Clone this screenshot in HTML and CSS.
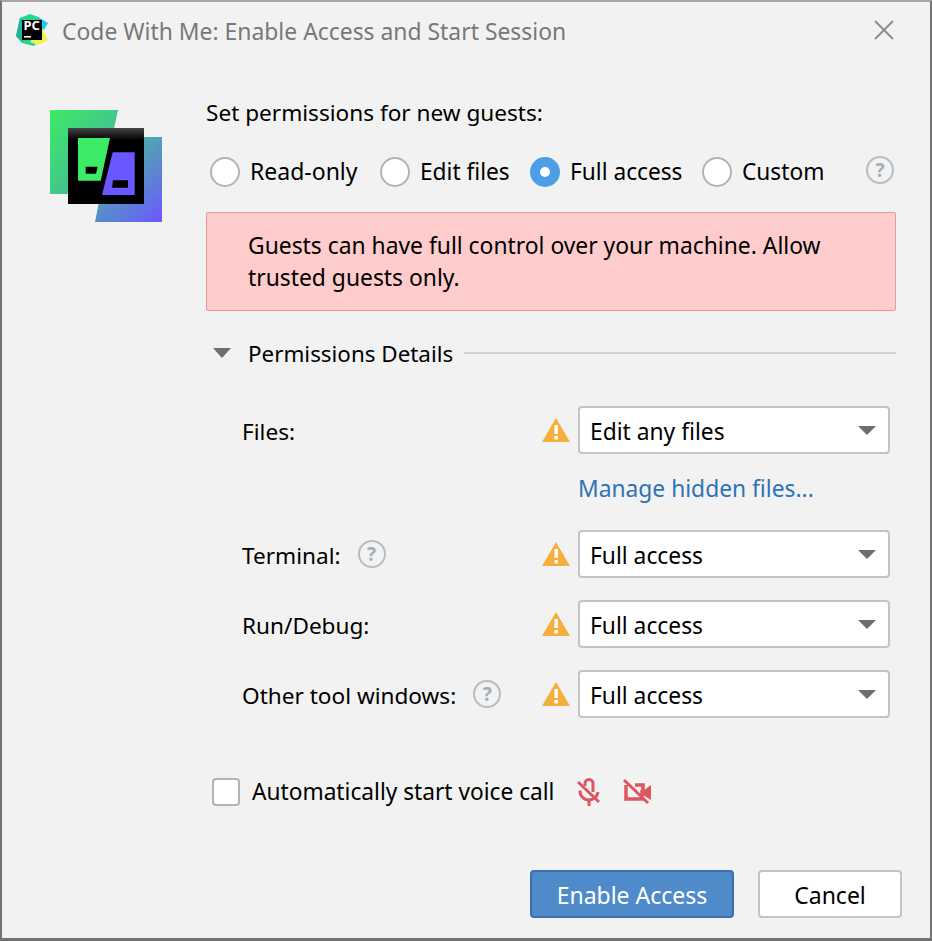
FILE: index.html
```html
<!DOCTYPE html>
<html lang="en">
<head>
<meta charset="utf-8">
<title>Code With Me</title>
<link rel="stylesheet" href="styles.css">
</head>
<body>
<div class="dialog">
  <header class="titlebar">
    <svg class="app-icon" width="32" height="32" viewBox="0 0 32 32">
      <polygon points="4,4 14,0 22,3 28,8 26,24 18,32 6,29 0,22" fill="#21d789"/>
      <polygon points="0,22 4,4 10,8 6,28" fill="#1db4a0"/>
      <polygon points="22,3 32,9 28,16 24,12" fill="#19c9ee"/>
      <polygon points="26,14 32,26 22,31 14,28" fill="#f5f04e"/>
      <rect x="6" y="6" width="20" height="20" fill="#000"/>
      <text x="7.5" y="16" class="app-icon-text">PC</text>
      <rect x="8" y="22" width="7" height="1.5" fill="#fff"/>
    </svg>
    <div class="title">Code With Me: Enable Access and Start Session</div>
    <svg class="close" width="20" height="20" viewBox="0 0 20 20"><path d="M1 1L19 19M19 1L1 19" stroke="#8f8f8f" stroke-width="2" fill="none"/></svg>
  </header>
  <main class="body">
    <div class="logo-col">
      <svg width="112" height="112" viewBox="50 110 112 112">
        <defs>
          <linearGradient id="lg1" x1="0" y1="0" x2="1" y2="1"><stop offset="0" stop-color="#3ceb66"/><stop offset="1" stop-color="#4aa8a8"/></linearGradient>
          <linearGradient id="lg2" x1=".45" y1=".25" x2="1" y2="1"><stop offset="0" stop-color="#4fa8b0"/><stop offset="1" stop-color="#6b57ff"/></linearGradient>
          <linearGradient id="lg3" x1="0" y1="0" x2="0" y2="1"><stop offset="0" stop-color="#444"/><stop offset=".16" stop-color="#000"/><stop offset="1" stop-color="#000"/></linearGradient>
        </defs>
        <polygon points="50,110 118,110 100,194 50,194" fill="url(#lg1)"/>
        <polygon points="112,137 162,137 162,222 95,222" fill="url(#lg2)"/>
        <rect x="68" y="128" width="76" height="76" fill="url(#lg3)"/>
        <polygon points="78,138 110,138 100.7,180.7 78,180.7" fill="#3ceb66"/>
        <polygon points="85.7,166.7 97.7,166.7 96,173.7 85.7,173.7" fill="#000"/>
        <polygon points="112.7,152.3 134.7,152.3 134.7,195 102,195" fill="#6b57ff"/>
        <polygon points="113,180.3 128,180.3 128,187.7 112,187.7" fill="#000"/>
      </svg>
    </div>
    <div class="content">
      <div class="heading">Set permissions for new guests:</div>
      <div class="radios">
        <label class="radio r1"><span class="dot"></span>Read-only</label>
        <label class="radio r2"><span class="dot"></span>Edit files</label>
        <label class="radio r3"><span class="dot on"></span>Full access</label>
        <label class="radio r4"><span class="dot"></span>Custom</label>
        <span class="help help-end">?</span>
      </div>
      <div class="alert">Guests can have full control over your machine. Allow trusted guests only.</div>
      <div class="details-head">
        <svg class="tri" width="18" height="10" viewBox="0 0 18 10"><polygon points="0,0 18,0 9,10" fill="#6e6e6e"/></svg>
        <span>Permissions Details</span>
        <span class="rule"></span>
      </div>
      <div class="rows">
        <div class="row">
          <div class="row-label">Files:</div>
          <svg class="warn" width="28" height="24" viewBox="0 0 28 24"><polygon points="14,0 28,24 0,24" fill="#f4af3d"/><rect x="12.5" y="7" width="3.4" height="9" fill="#fff"/><rect x="12.5" y="18" width="3.4" height="3.4" fill="#fff"/></svg>
          <div class="combo">Edit any files<span class="caret"></span></div>
        </div>
        <a class="link">Manage hidden files...</a>
        <div class="row">
          <div class="row-label">Terminal:<span class="help help-in">?</span></div>
          <svg class="warn" width="28" height="24" viewBox="0 0 28 24"><polygon points="14,0 28,24 0,24" fill="#f4af3d"/><rect x="12.5" y="7" width="3.4" height="9" fill="#fff"/><rect x="12.5" y="18" width="3.4" height="3.4" fill="#fff"/></svg>
          <div class="combo">Full access<span class="caret"></span></div>
        </div>
        <div class="row">
          <div class="row-label">Run/Debug:</div>
          <svg class="warn" width="28" height="24" viewBox="0 0 28 24"><polygon points="14,0 28,24 0,24" fill="#f4af3d"/><rect x="12.5" y="7" width="3.4" height="9" fill="#fff"/><rect x="12.5" y="18" width="3.4" height="3.4" fill="#fff"/></svg>
          <div class="combo">Full access<span class="caret"></span></div>
        </div>
        <div class="row">
          <div class="row-label">Other tool windows:<span class="help help-in">?</span></div>
          <svg class="warn" width="28" height="24" viewBox="0 0 28 24"><polygon points="14,0 28,24 0,24" fill="#f4af3d"/><rect x="12.5" y="7" width="3.4" height="9" fill="#fff"/><rect x="12.5" y="18" width="3.4" height="3.4" fill="#fff"/></svg>
          <div class="combo">Full access<span class="caret"></span></div>
        </div>
      </div>
      <div class="voice">
        <span class="check"></span>
        <span>Automatically start voice call</span>
        <svg class="mic" width="24" height="28" viewBox="0 0 24 28" fill="none" stroke="#db5860" stroke-width="3">
          <path d="M8 8V5.500a4 4 0 0 1 8 0V14"/>
          <path d="M3 12.500a9 9 0 0 0 9 9.500 9 9 0 0 0 9-8"/>
          <path d="M12 22v6"/>
          <path d="M1 4L22 24"/>
        </svg>
        <svg class="cam" width="28" height="26" viewBox="0 0 28 26" fill="none" stroke="#db5860" stroke-width="3.500">
          <path d="M3 6V20H19V11M12 6H20V11"/>
          <path d="M20 12L28 6V21L20 16Z" fill="#db5860" stroke="none"/>
          <path d="M1 1L25 24" stroke-width="3"/>
        </svg>
      </div>
    </div>
  </main>
  <footer class="footer">
    <button class="btn primary">Enable Access</button>
    <button class="btn">Cancel</button>
  </footer>
</div>
</body>
</html>
```

FILE: styles.css
```css
* { box-sizing: border-box; }
html, body { margin: 0; padding: 0; }
body {
  width: 932px;
  height: 941px;
  overflow: hidden;
  font-family: "Noto Sans", "Open Sans", sans-serif;
  font-size: 22.7px;
  color: #000;
  background: #f2f2f2;
}
.dialog {
  width: 932px;
  height: 941px;
  display: flex;
  flex-direction: column;
  background: #f2f2f2;
  border-style: solid;
  border-color: #a6a6a6 #737373 #737373 #737373;
  border-width: 2px 2px 3px 2px;
}
.titlebar {
  height: 58px;
  flex: none;
  display: flex;
  align-items: center;
  padding: 0 36px 0 14px;
}
.app-icon { flex: none; margin-top: -2px; }
.app-icon-text { font: 700 13px "Noto Sans", sans-serif; fill: #fff; }
.title { margin-left: 14px; color: #787878; flex: 1; white-space: nowrap; font-size: 22.9px; }
.close { flex: none; margin-top: -2px; }
.body { display: flex; flex: 1; min-height: 0; padding: 50px 34px 0 48px; }
.logo-col { width: 156px; flex: none; }
.logo-col svg { display: block; }
.content { flex: 1; min-width: 0; margin-top: -14px; }
.heading { height: 36px; line-height: 34px; font-size: 22.6px; }
.radios { display: flex; align-items: center; height: 40px; margin-top: 20px; padding-left: 4px; }
.radio { display: flex; align-items: center; white-space: nowrap; padding-bottom: 2px; }
.r1 { width: 170px; font-size: 23px; }
.r2 { width: 150px; }
.r3 { width: 172px; }
.r4 { flex: 1; }
.dot {
  width: 30px; height: 30px; flex: none;
  border-radius: 50%;
  background: #fff;
  border: 2.5px solid #b3b3b3;
  margin: 2px 10px 0 0;
}
.dot.on { background: #fff; border: 10px solid #4c9ee6; }
.help {
  display: inline-flex; align-items: center; justify-content: center;
  width: 28px; height: 28px; flex: none;
  border: 2px solid #b4bec6;
  border-radius: 50%;
  color: #a2adb6;
  font-size: 19px; font-weight: 700;
  line-height: 1;
}
.help-end { margin-right: 2px; margin-top: -4px; }
.help-in { margin: -2px 0 0 17px; }
.alert {
  margin-top: 20px;
  height: 99px;
  background: #ffcccc;
  border: 1.5px solid #e39a9a;
  border-radius: 2px;
  padding: 17px 40px 0 41px;
  line-height: 32px;
  font-size: 22.85px;
}
.details-head { display: flex; align-items: center; height: 32px; margin-top: 27px; padding: 0 0 2px 7px; font-size: 22.4px; }
.tri { flex: none; margin: 0 17px 0 0; }
.rule { flex: 1; height: 2px; background: #d1d1d1; margin-left: 11px; }
.rows { display: flex; flex-direction: column; gap: 22px; margin-top: 36px; padding-left: 36px; }
.row { display: flex; align-items: center; height: 48px; }
.row-label { width: 300px; flex: none; display: flex; align-items: center; white-space: nowrap; padding-top: 2px; font-size: 22.6px; }
.warn { flex: none; margin-right: 8px; }
.combo {
  flex: 1;
  max-width: 312px;
  height: 48px;
  background: #fff;
  border: 2px solid #c4c4c4;
  border-radius: 4px;
  display: flex;
  align-items: center;
  justify-content: space-between;
  padding: 2px 12px 0 10px;
  font-size: 22.8px;
}
.caret { width: 0; height: 0; margin-top: -2px; border-left: 9px solid transparent; border-right: 9px solid transparent; border-top: 9px solid #6e6e6e; }
.link { display: block; height: 32px; line-height: 32px; margin: -3px 0 3px 336px; color: #2f72b5; font-size: 22.8px; }
.voice { display: flex; align-items: center; height: 40px; margin-top: 54px; padding: 0 0 2px 6px; font-size: 22.7px; }
.check { width: 28px; height: 28px; flex: none; margin: 2px 12px 0 0; background: #fff; border: 2.5px solid #b3b3b3; border-radius: 4px; }
.mic { flex: none; margin: 2px 0 0 23px; }
.cam { flex: none; margin: 2px 0 0 22px; }
.footer { flex: none; display: flex; justify-content: flex-end; gap: 24px; padding: 0 28px 20px 0; }
.btn {
  height: 48px; width: 144px;
  font: inherit; font-size: 23px; color: #000;
  background: #fff;
  border: 2px solid #c4c4c4;
  border-radius: 4px;
  padding: 2px 0 0;
}
.btn.primary { width: 204px; background: #4f8bcb; border-color: #3c70ad; color: #fff; }
```
